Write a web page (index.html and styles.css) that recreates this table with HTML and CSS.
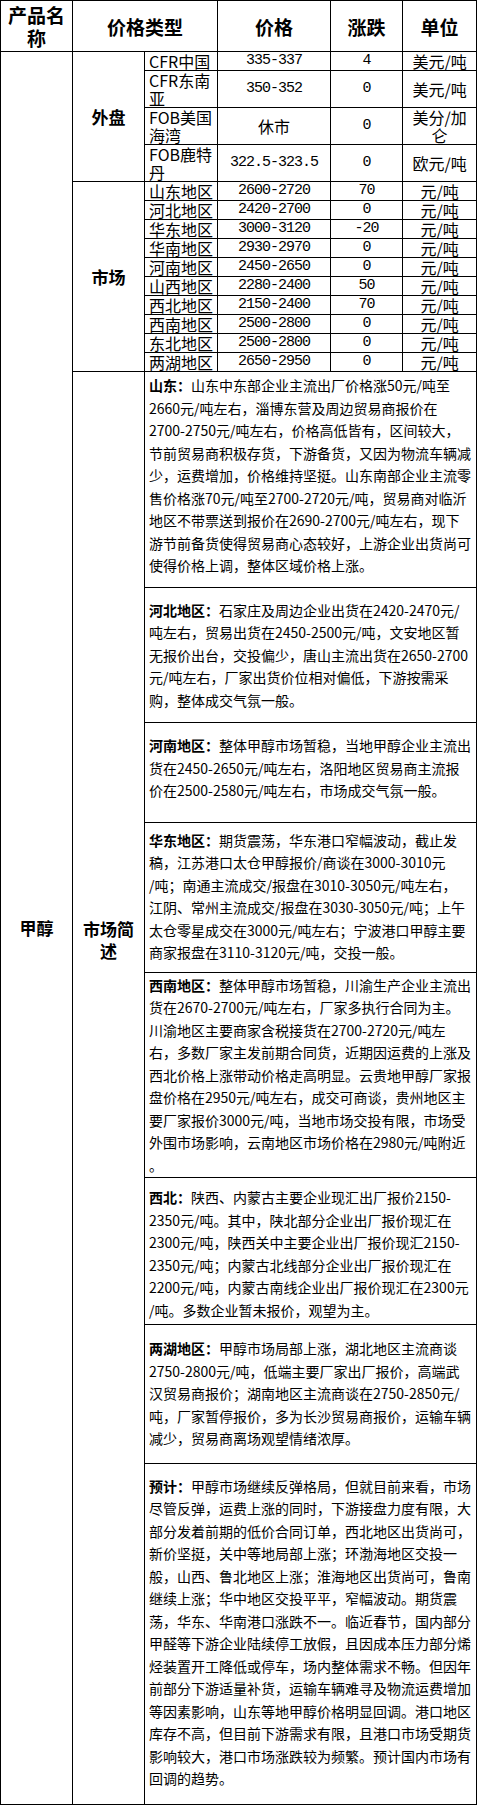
FILE: index.html
```html
<!DOCTYPE html>
<html lang="zh-CN">
<head>
<meta charset="utf-8">
<title>甲醇价格</title>
<link rel="stylesheet" href="styles.css">
</head>
<body>
<table class="sheet">
  <colgroup>
    <col class="c-prod">
    <col class="c-type">
    <col class="c-region">
    <col class="c-price">
    <col class="c-chg">
    <col class="c-unit">
  </colgroup>
  <thead>
    <tr>
      <th>产品名称</th>
      <th colspan="2">价格类型</th>
      <th>价格</th>
      <th>涨跌</th>
      <th>单位</th>
    </tr>
  </thead>
  <tbody>
    <tr>
      <td rowspan="22" class="label">甲醇</td>
      <td rowspan="4" class="label">外盘</td>
      <td class="region">CFR中国</td>
      <td class="num">335-337</td>
      <td class="num">4</td>
      <td>美元/吨</td>
    </tr>
    <tr>
      <td class="region">CFR东南<br>亚</td>
      <td class="num">350-352</td>
      <td class="num">0</td>
      <td>美元/吨</td>
    </tr>
    <tr>
      <td class="region">FOB美国<br>海湾</td>
      <td>休市</td>
      <td class="num">0</td>
      <td>美分/加<br>仑</td>
    </tr>
    <tr>
      <td class="region">FOB鹿特<br>丹</td>
      <td class="num">322.5-323.5</td>
      <td class="num">0</td>
      <td>欧元/吨</td>
    </tr>
    <tr>
      <td rowspan="10" class="label">市场</td>
      <td class="region">山东地区</td>
      <td class="num">2600-2720</td>
      <td class="num">70</td>
      <td>元/吨</td>
    </tr>
    <tr>
      <td class="region">河北地区</td>
      <td class="num">2420-2700</td>
      <td class="num">0</td>
      <td>元/吨</td>
    </tr>
    <tr>
      <td class="region">华东地区</td>
      <td class="num">3000-3120</td>
      <td class="num">-20</td>
      <td>元/吨</td>
    </tr>
    <tr>
      <td class="region">华南地区</td>
      <td class="num">2930-2970</td>
      <td class="num">0</td>
      <td>元/吨</td>
    </tr>
    <tr>
      <td class="region">河南地区</td>
      <td class="num">2450-2650</td>
      <td class="num">0</td>
      <td>元/吨</td>
    </tr>
    <tr>
      <td class="region">山西地区</td>
      <td class="num">2280-2400</td>
      <td class="num">50</td>
      <td>元/吨</td>
    </tr>
    <tr>
      <td class="region">西北地区</td>
      <td class="num">2150-2400</td>
      <td class="num">70</td>
      <td>元/吨</td>
    </tr>
    <tr>
      <td class="region">西南地区</td>
      <td class="num">2500-2800</td>
      <td class="num">0</td>
      <td>元/吨</td>
    </tr>
    <tr>
      <td class="region">东北地区</td>
      <td class="num">2500-2800</td>
      <td class="num">0</td>
      <td>元/吨</td>
    </tr>
    <tr>
      <td class="region">两湖地区</td>
      <td class="num">2650-2950</td>
      <td class="num">0</td>
      <td>元/吨</td>
    </tr>
    <tr>
      <td rowspan="8" class="label summary">市场简述</td>
      <td colspan="4" class="note note-sd"><b>山东：</b>山东中东部企业主流出厂价格涨50元/吨至<br>2660元/吨左右，淄博东营及周边贸易商报价在<br>2700-2750元/吨左右，价格高低皆有，区间较大，<br>节前贸易商积极存货，下游备货，又因为物流车辆减<br>少，运费增加，价格维持坚挺。山东南部企业主流零<br>售价格涨70元/吨至2700-2720元/吨，贸易商对临沂<br>地区不带票送到报价在2690-2700元/吨左右，现下<br>游节前备货使得贸易商心态较好，上游企业出货尚可<br>使得价格上调，整体区域价格上涨。</td>
    </tr>
    <tr>
      <td colspan="4" class="note note-hb"><b>河北地区：</b>石家庄及周边企业出货在2420-2470元/<br>吨左右，贸易出货在2450-2500元/吨，文安地区暂<br>无报价出台，交投偏少，唐山主流出货在2650-2700<br>元/吨左右，厂家出货价位相对偏低，下游按需采<br>购，整体成交气氛一般。</td>
    </tr>
    <tr>
      <td colspan="4" class="note note-hn"><b>河南地区：</b>整体甲醇市场暂稳，当地甲醇企业主流出<br>货在2450-2650元/吨左右，洛阳地区贸易商主流报<br>价在2500-2580元/吨左右，市场成交气氛一般。</td>
    </tr>
    <tr>
      <td colspan="4" class="note note-hd"><b>华东地区：</b>期货震荡，华东港口窄幅波动，截止发<br>稿，江苏港口太仓甲醇报价/商谈在3000-3010元<br>/吨；南通主流成交/报盘在3010-3050元/吨左右，<br>江阴、常州主流成交/报盘在3030-3050元/吨；上午<br>太仓零星成交在3000元/吨左右；宁波港口甲醇主要<br>商家报盘在3110-3120元/吨，交投一般。</td>
    </tr>
    <tr>
      <td colspan="4" class="note note-xn"><b>西南地区：</b>整体甲醇市场暂稳，川渝生产企业主流出<br>货在2670-2700元/吨左右，厂家多执行合同为主。<br>川渝地区主要商家含税接货在2700-2720元/吨左<br>右，多数厂家主发前期合同货，近期因运费的上涨及<br>西北价格上涨带动价格走高明显。云贵地甲醇厂家报<br>盘价格在2950元/吨左右，成交可商谈，贵州地区主<br>要厂家报价3000元/吨，当地市场交投有限，市场受<br>外围市场影响，云南地区市场价格在2980元/吨附近<br>。</td>
    </tr>
    <tr>
      <td colspan="4" class="note note-xb"><b>西北：</b>陕西、内蒙古主要企业现汇出厂报价2150-<br>2350元/吨。其中，陕北部分企业出厂报价现汇在<br>2300元/吨，陕西关中主要企业出厂报价现汇2150-<br>2350元/吨；内蒙古北线部分企业出厂报价现汇在<br>2200元/吨，内蒙古南线企业出厂报价现汇在2300元<br>/吨。多数企业暂未报价，观望为主。</td>
    </tr>
    <tr>
      <td colspan="4" class="note note-lh"><b>两湖地区：</b>甲醇市场局部上涨，湖北地区主流商谈<br>2750-2800元/吨，低端主要厂家出厂报价，高端武<br>汉贸易商报价；湖南地区主流商谈在2750-2850元/<br>吨，厂家暂停报价，多为长沙贸易商报价，运输车辆<br>减少，贸易商离场观望情绪浓厚。</td>
    </tr>
    <tr>
      <td colspan="4" class="note note-yj"><b>预计：</b>甲醇市场继续反弹格局，但就目前来看，市场<br>尽管反弹，运费上涨的同时，下游接盘力度有限，大<br>部分发着前期的低价合同订单，西北地区出货尚可，<br>新价坚挺，关中等地局部上涨；环渤海地区交投一<br>般，山西、鲁北地区上涨；淮海地区出货尚可，鲁南<br>继续上涨；华中地区交投平平，窄幅波动。期货震<br>荡，华东、华南港口涨跌不一。临近春节，国内部分<br>甲醛等下游企业陆续停工放假，且因成本压力部分烯<br>烃装置开工降低或停车，场内整体需求不畅。但因年<br>前部分下游适量补货，运输车辆难寻及物流运费增加<br>等因素影响，山东等地甲醇价格明显回调。港口地区<br>库存不高，但目前下游需求有限，且港口市场受期货<br>影响较大，港口市场涨跌较为频繁。预计国内市场有<br>回调的趋势。</td>
    </tr>
  </tbody>
</table>
</body>
</html>
```

FILE: styles.css
```css
html, body {
  margin: 0;
  padding: 0;
  background: #fff;
}

body {
  font-family: "Noto Sans CJK SC", "Noto Sans", sans-serif;
  color: #000;
}

.sheet {
  border-collapse: collapse;
  table-layout: fixed;
  width: 476px;
}

.c-prod { width: 72px; }
.c-type { width: 72px; }
.c-region { width: 73px; }
.c-price { width: 113px; }
.c-chg { width: 72px; }
.c-unit { width: 74px; }

.sheet th,
.sheet td {
  border: 1px solid #000;
  padding: 0 2px;
  font-size: 16px;
  line-height: 18px;
  font-weight: 400;
  text-align: center;
  vertical-align: middle;
}

.sheet th {
  font-size: 19px;
  line-height: 23px;
  font-weight: 700;
  padding: 2px;
}

.sheet td.label {
  font-size: 17px;
  line-height: 22px;
  font-weight: 700;
}

.sheet td.summary {
  padding-bottom: 296px;
}

.sheet td.region {
  text-align: left;
  padding-left: 4px;
}

.sheet td.num {
  font-family: "Liberation Mono", "DejaVu Sans Mono", monospace;
  font-size: 15px;
  letter-spacing: -1px;
}

.sheet td.note {
  text-align: left;
  vertical-align: top;
  font-size: 14px;
  line-height: 22.5px;
  white-space: nowrap;
  padding: 11px 2px 11px 4px;
}

.note b {
  font-weight: 700;
}

.sheet td.note-sd { padding-top: 2px; padding-bottom: 10px; }
.sheet td.note-hb { padding-top: 11px; padding-bottom: 11px; }
.sheet td.note-hn { padding-top: 11px; padding-bottom: 20px; }
.sheet td.note-hd { padding-top: 6px; padding-bottom: 8px; }
.sheet td.note-xn { padding-top: 1px; padding-bottom: 1px; }
.sheet td.note-xb { padding-top: 8px; padding-bottom: 3px; }
.sheet td.note-lh { padding-top: 12px; padding-bottom: 13px; }
.sheet td.note-yj { padding-top: 11px; padding-bottom: 14px; }
```
